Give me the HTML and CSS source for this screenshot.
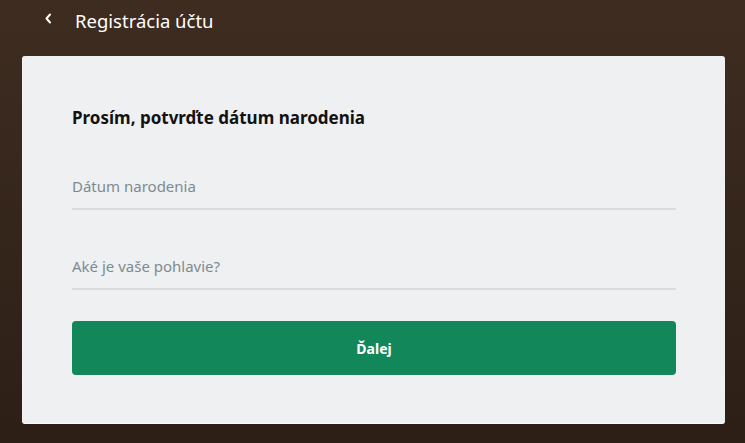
FILE: index.html
```html
<!DOCTYPE html>
<html lang="sk">
<head>
<meta charset="utf-8">
<title>Registrácia účtu</title>
<link rel="stylesheet" href="styles.css">
</head>
<body>
  <header class="topbar">
    <button class="back" aria-label="Späť">
      <svg width="8" height="11" viewBox="0 0 8 11"><path d="M6 1.5 L2.5 5.5 L6 9.5" fill="none" stroke="#fff" stroke-width="2" stroke-linecap="round" stroke-linejoin="round"/></svg>
    </button>
    <h1 class="title">Registrácia účtu</h1>
  </header>
  <main class="card">
    <h2 class="heading">Prosím, potvrďte dátum narodenia</h2>
    <div class="field"><span class="placeholder">Dátum narodenia</span></div>
    <div class="field"><span class="placeholder">Aké je vaše pohlavie?</span></div>
    <button class="next">Ďalej</button>
  </main>
</body>
</html>
```

FILE: styles.css
```css
html, body {
  margin: 0;
  height: 100%;
}
body {
  background: linear-gradient(180deg, #3e2c20 0%, #35261c 50%, #2d1f16 100%);
  font-family: "Noto Sans", "Open Sans", sans-serif;
  display: flex;
  flex-direction: column;
}
.topbar {
  height: 56px;
  display: flex;
  align-items: flex-start;
  padding-left: 42px;
  box-sizing: border-box;
}
.back {
  background: none;
  border: 0;
  padding: 0;
  width: 12px;
  height: 42px;
  display: flex;
  align-items: center;
  justify-content: center;
  margin-top: -3px;
}
.title {
  margin: 0 0 0 21px;
  font-size: 18.5px;
  font-weight: 400;
  line-height: 42px;
  color: #fff;
}
.card {
  margin: 0 20px 0 22px;
  height: 368px;
  box-sizing: border-box;
  background: #eef0f2;
  border-radius: 3px;
  border-bottom: 1px solid #fafafa;
  border-left: 1px solid #f4f4f4;
  padding: 50px 49px 0 49px;
}
.heading {
  margin: 0;
  font-size: 17px;
  font-weight: 700;
  line-height: 24px;
  color: #121212;
}
.field {
  margin-top: 46px;
  padding-bottom: 12px;
  border-bottom: 2px solid #d6dcdf;
}
.placeholder {
  display: block;
  font-size: 15px;
  line-height: 20px;
  color: #7d8b91;
}
.next {
  display: block;
  width: 100%;
  margin-top: 31px;
  height: 54px;
  border: 0;
  border-radius: 4px;
  background: #12875a;
  color: #fff;
  font-family: "Noto Sans", "Open Sans", sans-serif;
  font-size: 14px;
  font-weight: 700;
}
```
